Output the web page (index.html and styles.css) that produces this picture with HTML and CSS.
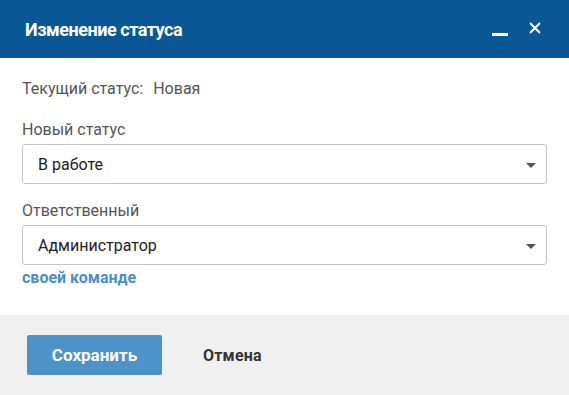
FILE: index.html
```html
<!DOCTYPE html>
<html lang="ru">
<head>
    <meta charset="UTF-8">
    <title>Изменение статуса</title>
    <link rel="stylesheet" href="styles.css">
</head>
<body>

<div class="dialog">
    <div class="dialog-header">
        <span class="dialog-title">Изменение статуса</span>
        <div class="header-buttons">
            <span class="btn-minimize"></span>
            <svg class="btn-close" width="12" height="12" viewBox="0 0 12 12">
                <path d="M1 1 L11 11 M11 1 L1 11" stroke="#fff" stroke-width="2"/>
            </svg>
        </div>
    </div>

    <div class="dialog-body">
        <div class="current-status">
            <span>Текущий статус:</span>
            <span>Новая</span>
        </div>

        <div class="field">
            <label class="field-label">Новый статус</label>
            <div class="select">
                <span class="select-value">В работе</span>
                <span class="select-arrow"></span>
            </div>
        </div>

        <div class="field">
            <label class="field-label">Ответственный</label>
            <div class="select">
                <span class="select-value">Администратор</span>
                <span class="select-arrow"></span>
            </div>
            <a class="team-link" href="#">своей команде</a>
        </div>
    </div>

    <div class="dialog-footer">
        <button class="btn-save">Сохранить</button>
        <button class="btn-cancel">Отмена</button>
    </div>
</div>

</body>
</html>
```

FILE: styles.css
```css
* {
    margin: 0;
    padding: 0;
    box-sizing: border-box;
}

body {
    font-family: Roboto, "Liberation Sans", sans-serif;
    background-color: #fff;
}

.dialog {
    width: 569px;
    height: 395px;
    display: flex;
    flex-direction: column;
}

.dialog-header {
    height: 58px;
    background-color: #0a5795;
    display: flex;
    align-items: center;
    justify-content: space-between;
    padding: 0 28px 0 25px;
}

.dialog-title {
    color: #fff;
    font-size: 18px;
    font-weight: 700;
    letter-spacing: -0.45px;
}

.header-buttons {
    display: flex;
    align-items: center;
    gap: 21px;
}

.btn-minimize {
    display: block;
    width: 16px;
    height: 3px;
    background-color: #fff;
    margin-top: 10px;
}

.btn-close {
    display: block;
    margin-top: -2px;
}

.dialog-body {
    flex: 1;
    padding: 21px 22px 0 22px;
}

.current-status {
    display: flex;
    gap: 10px;
    font-size: 16px;
    color: #555;
    line-height: 20px;
}

.field {
    margin-top: 21px;
    display: flex;
    flex-direction: column;
}

.field + .field {
    margin-top: 17px;
}

.field-label {
    font-size: 16px;
    color: #555;
    line-height: 20px;
    margin-bottom: 4px;
}

.select {
    height: 40px;
    border: 1px solid #c4c4c4;
    border-radius: 3px;
    display: flex;
    align-items: center;
    justify-content: space-between;
    padding: 0 10px 0 15px;
}

.select-value {
    font-size: 16px;
    color: #222;
}

.select-arrow {
    width: 0;
    height: 0;
    border-left: 5px solid transparent;
    border-right: 5px solid transparent;
    border-top: 5px solid #555;
    margin-top: 2px;
}

.team-link {
    margin-top: 3px;
    font-size: 16px;
    font-weight: 700;
    color: #4a8fc7;
    text-decoration: none;
    line-height: 20px;
}

.dialog-footer {
    height: 80px;
    background-color: #f0f0f0;
    display: flex;
    align-items: center;
    padding: 0 27px;
}

.btn-save {
    width: 135px;
    height: 40px;
    background-color: #4d92c9;
    color: #fff;
    border: none;
    border-radius: 2px;
    font-family: Roboto, "Liberation Sans", sans-serif;
    font-size: 17px;
    font-weight: 700;
}

.btn-cancel {
    background: none;
    border: none;
    margin-left: 41px;
    color: #333;
    font-family: Roboto, "Liberation Sans", sans-serif;
    font-size: 16px;
    font-weight: 700;
    letter-spacing: 0.2px;
}
```
